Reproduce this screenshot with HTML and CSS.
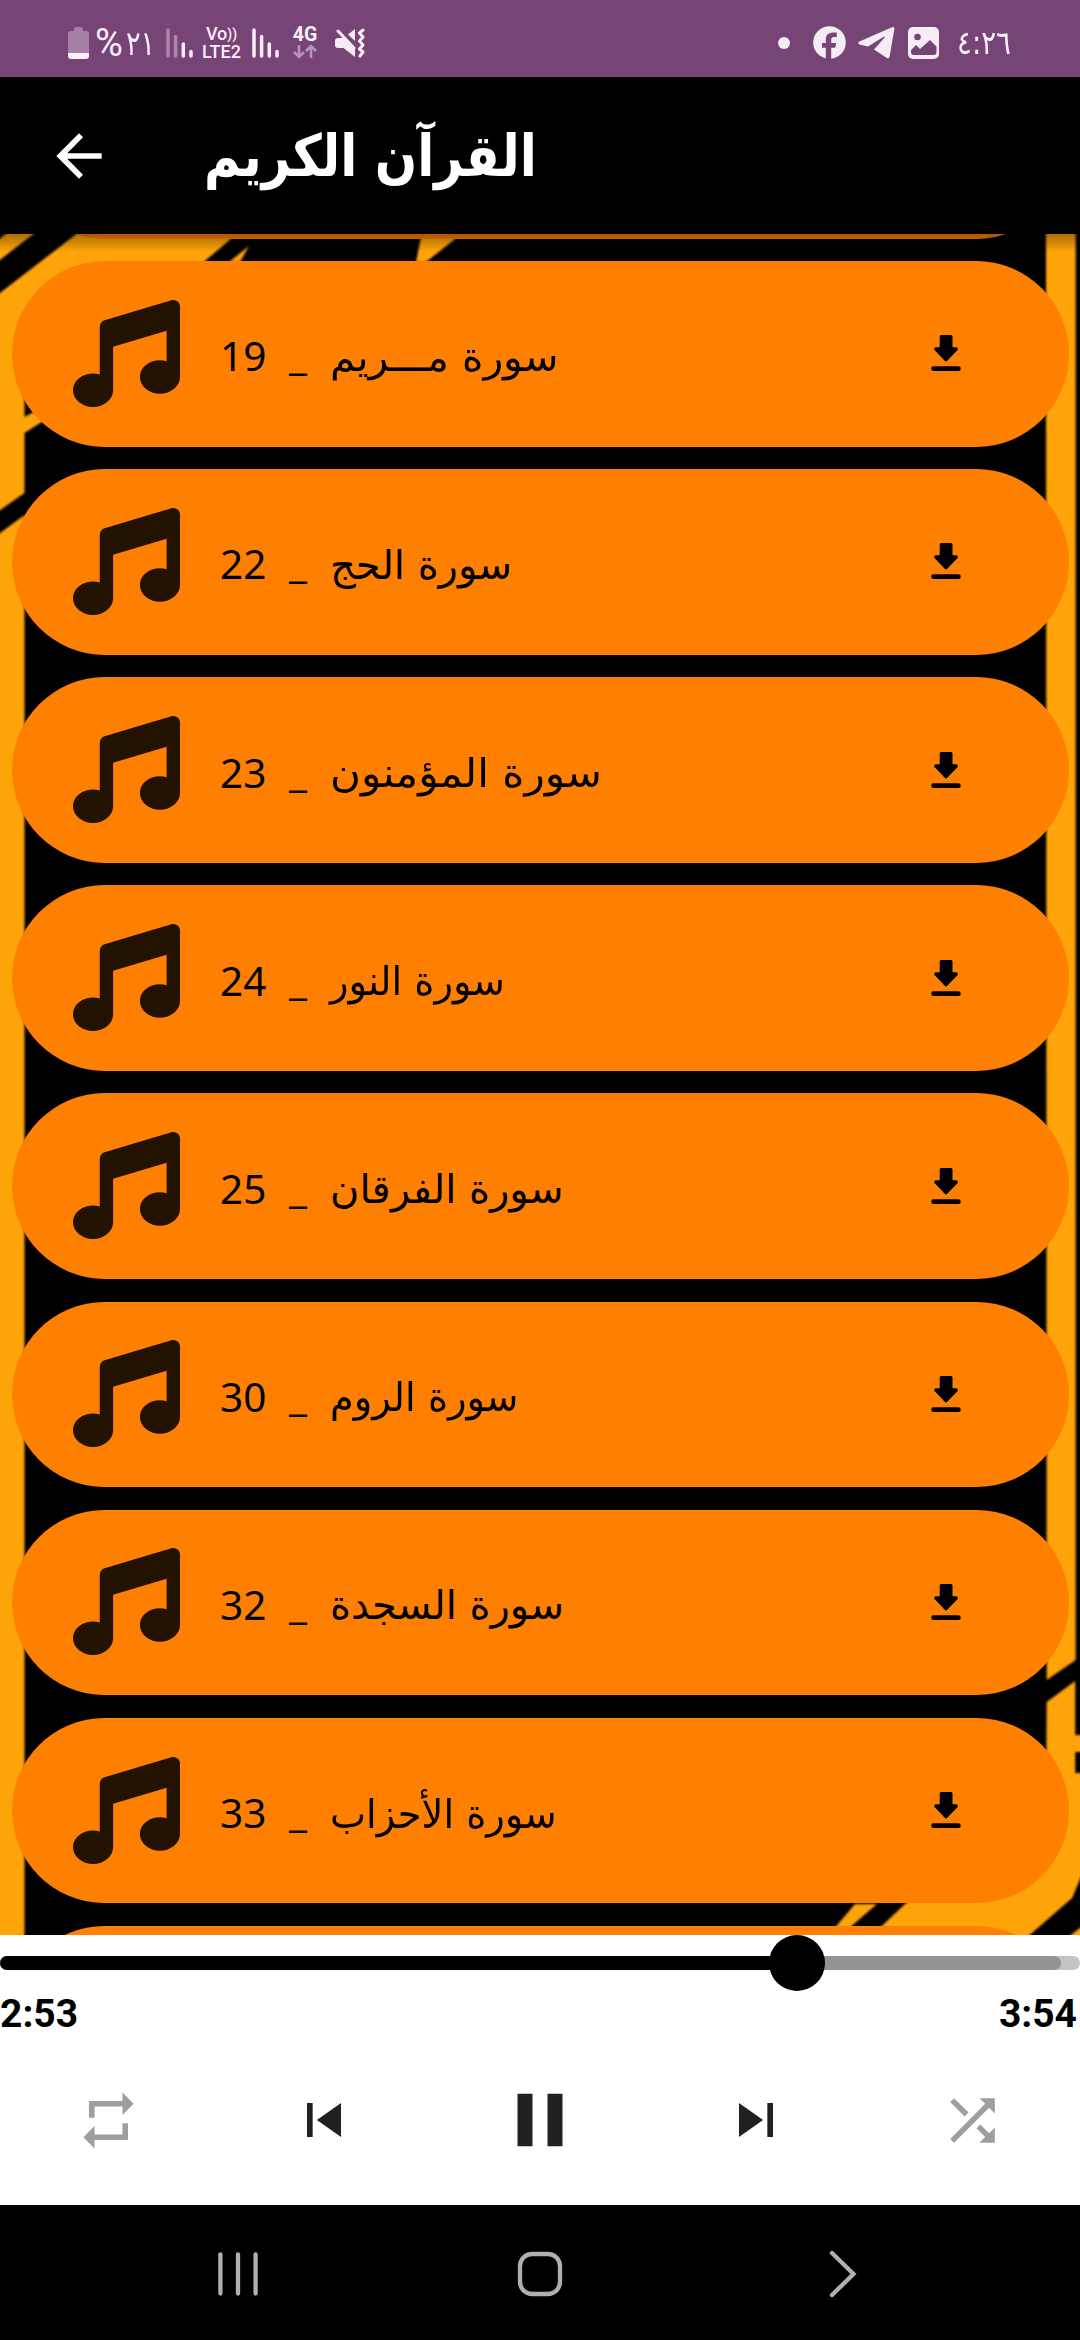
FILE: index.html
```html
<!DOCTYPE html>
<html lang="ar">
<head>
    <meta charset="UTF-8">
    <meta name="viewport" content="width=device-width, initial-scale=1.0">
    <title>القرآن الكريم</title>
    <link rel="stylesheet" href="styles.css">
</head>
<body>
    <!-- Shared icons -->
    <svg class="icon-defs">
        <symbol id="music" viewBox="0 0 512 512">
            <path d="M499.1 6.3c8.1 6 12.9 15.6 12.9 25.7v72V368c0 44.2-43 80-96 80s-96-35.8-96-80s43-80 96-80c11.2 0 22 1.6 32 4.6V147L192 223.8V432c0 44.2-43 80-96 80s-96-35.8-96-80s43-80 96-80c11.2 0 22 1.6 32 4.6V200 128c0-14.1 9.3-26.6 22.8-30.7l320-96c9.7-2.9 20.2-1.1 28.3 5z"/>
        </symbol>
        <symbol id="download" viewBox="0 0 30 36">
            <path d="M10 0h10a1.500 1.500 0 0 1 1.500 1.500V12.300h3.700a1.800 1.800 0 0 1 1.200 3L16 26a1.500 1.500 0 0 1-2 0L3.700 15.300a1.800 1.800 0 0 1 1.200-3H8.700V1.500A1.500 1.500 0 0 1 10 0z"/>
            <rect x="0.300" y="31.200" width="29.400" height="4.800" rx="2"/>
        </symbol>
        <symbol id="signal" viewBox="0 0 27 30">
            <path d="M2 2v26M9.600 8.500v19.500" class="bar-tall"/>
            <path d="M17.300 16v12M25 23.500v4.500"/>
        </symbol>
    </svg>

    <!-- Status bar -->
    <div class="status">
        <div class="status-left">
            <svg class="battery" width="21" height="32" viewBox="0 0 21 32">
                <path d="M6 2a2 2 0 0 1 2-2h5a2 2 0 0 1 2 2v2h3a3 3 0 0 1 3 3v19H0V7a3 3 0 0 1 3-3h3z" opacity=".35"/>
                <path d="M0 26h21v3a3 3 0 0 1-3 3H3a3 3 0 0 1-3-3z"/>
            </svg>
            <span class="percent">%</span><span class="level">٢١</span>
            <svg class="signal weak" width="27" height="30"><use href="#signal"/></svg>
            <div class="volte"><span>Vo<i>))</i></span><span>LTE2</span></div>
            <svg class="signal" width="27" height="30"><use href="#signal"/></svg>
            <div class="data">
                <span>4G</span>
                <svg width="24" height="15" viewBox="0 0 24 15"><path d="M6 1v12M1 8l5 5 5-5M18 14V2M13 7l5-5 5 5"/></svg>
            </div>
            <svg class="mute" width="30" height="30" viewBox="0 0 30 30">
                <path d="M20 1v12L13 6.500zM6 10l3-1L20 20v9L8.500 20H3q-3 0-3-3v-4q0-3 3-3z" fill="#f6ecf6"/>
                <path d="M3 3l16 17M28 2l-3.500 3 3.500 4-3.500 4 3.500 4-3.500 4 3.500 3-3 4" fill="none" stroke="#f6ecf6" stroke-width="3" stroke-linecap="round" stroke-linejoin="round"/>
            </svg>
        </div>
        <div class="status-right">
            <span class="dot"></span>
            <svg width="33" height="33" viewBox="0 0 33 33">
                <circle cx="16.500" cy="16.500" r="16.300" fill="#f6ecf6"/>
                <path d="M12.800 33V21.700H9v-4.600h3.800v-3.300q0-7.200 7.400-7.200h3.600v4.300h-2.600q-3 0-3 3v3.200h4.900l-.8 4.600h-4.100V33z" fill="#774476"/>
            </svg>
            <svg class="telegram" width="37" height="32" viewBox="0 0 37 32">
                <path d="M1.500 14.500L34 .3q2.600-.8 2.400 1.700L31.500 30q-.6 2-2.600 1L16 22.500 27 10q-.3-1-1.300-.3L10 19.500 1.500 17.500q-2.500-1.500 0-3z" fill="#f6ecf6"/>
            </svg>
            <svg class="gallery" width="31" height="32" viewBox="0 0 31 32">
                <rect width="31" height="32" rx="5" fill="#f6ecf6"/>
                <circle cx="9.500" cy="10" r="3.300" fill="#774476"/>
                <path d="M3 23l5-5 4 4 10-9 6.500 6.500V25q0 3-3 3h-19.500q-3 0-3-3z" fill="#774476"/>
            </svg>
            <span class="clock">٤:٢٦</span>
        </div>
    </div>

    <!-- App bar -->
    <header class="appbar">
        <svg class="back" width="68" height="68" viewBox="0 0 24 24"><path d="M20 11H7.830l5.590-5.590L12 4l-8 8 8 8 1.410-1.410L7.830 13H20v-2z"/></svg>
        <h1 dir="rtl">القرآن الكريم</h1>
    </header>

    <!-- Surah list over the striped wallpaper -->
    <main class="list">
        <svg class="wallpaper" width="1080" height="1701" viewBox="0 0 1080 1701">
            <rect width="1080" height="1701" fill="#000"/>
            <g class="stripes">
                <path d="M8-2h28L-4 29V8z"/>
                <path d="M79-2h160l-34 29L24.500 147V183l22-12v14L24.500 199V259L-4 279V62z"/>
                <path d="M249 12l-20 16h11zM422-2h42l-38 30h-10z"/>
                <path d="M24.500 281V1706H-4V302z"/>
                <path d="M1046-4h29.700v1430l-29 20z"/>
                <path d="M1046.700 1468l28.500-21v54h10v17h-10v21h10v94l-13 31-47 41H868l37-35 141-104z"/>
                <path d="M855 1670h22l-30 26h-14zM1085 1690v14h-18z"/>
            </g>
        </svg>
        <div class="rows">
            <div class="row"></div>
            <div class="row">
                <svg class="note"><use href="#music"/></svg>
                <span class="num">19</span><span class="sep">_</span><span class="name stretched" dir="rtl">سورة مـــريم</span>
                <svg class="download"><use href="#download"/></svg>
            </div>
            <div class="row">
                <svg class="note"><use href="#music"/></svg>
                <span class="num">22</span><span class="sep">_</span><span class="name" dir="rtl">سورة الحج</span>
                <svg class="download"><use href="#download"/></svg>
            </div>
            <div class="row">
                <svg class="note"><use href="#music"/></svg>
                <span class="num">23</span><span class="sep">_</span><span class="name wide" dir="rtl">سورة المؤمنون</span>
                <svg class="download"><use href="#download"/></svg>
            </div>
            <div class="row">
                <svg class="note"><use href="#music"/></svg>
                <span class="num">24</span><span class="sep">_</span><span class="name tight" dir="rtl">سورة النور</span>
                <svg class="download"><use href="#download"/></svg>
            </div>
            <div class="row">
                <svg class="note"><use href="#music"/></svg>
                <span class="num">25</span><span class="sep">_</span><span class="name" dir="rtl">سورة الفرقان</span>
                <svg class="download"><use href="#download"/></svg>
            </div>
            <div class="row">
                <svg class="note"><use href="#music"/></svg>
                <span class="num">30</span><span class="sep">_</span><span class="name tight" dir="rtl">سورة الروم</span>
                <svg class="download"><use href="#download"/></svg>
            </div>
            <div class="row">
                <svg class="note"><use href="#music"/></svg>
                <span class="num">32</span><span class="sep">_</span><span class="name" dir="rtl">سورة السجدة</span>
                <svg class="download"><use href="#download"/></svg>
            </div>
            <div class="row">
                <svg class="note"><use href="#music"/></svg>
                <span class="num">33</span><span class="sep">_</span><span class="name tight" dir="rtl">سورة الأحزاب</span>
                <svg class="download"><use href="#download"/></svg>
            </div>
            <div class="row"></div>
        </div>
    </main>

    <!-- Player -->
    <section class="player">
        <div class="seek">
            <div class="buffered"></div>
            <div class="played"></div>
            <div class="thumb"></div>
        </div>
        <div class="times"><span>2:53</span><span>3:54</span></div>
        <div class="controls">
            <button class="off"><svg width="67" height="67" viewBox="0 0 24 24"><path d="M7 7h10v3l4-4-4-4v3H5v6h2V7zm10 10H7v-3l-4 4 4 4v-3h12v-6h-2v4z"/></svg></button>
            <button><svg width="68" height="68" viewBox="0 0 24 24"><path d="M6 6h2v12H6zm3.500 6l8.500 6V6z"/></svg></button>
            <button><svg width="90" height="90" viewBox="0 0 24 24"><path d="M6 19h4V5H6v14zm8-14v14h4V5h-4z"/></svg></button>
            <button><svg width="68" height="68" viewBox="0 0 24 24"><path d="M6 18l8.500-6L6 6v12zM16 6v12h2V6h-2z"/></svg></button>
            <button class="off"><svg width="67" height="67" viewBox="0 0 24 24"><path d="M10.590 9.170L5.410 4 4 5.410l5.170 5.170 1.420-1.410zM14.500 4l2.040 2.040L4 18.590 5.410 20 17.960 7.460 20 9.500V4h-5.500zm.330 9.410l-1.410 1.410 3.130 3.130L14.500 20H20v-5.500l-2.040 2.040-3.130-3.130z"/></svg></button>
        </div>
    </section>

    <!-- System navigation -->
    <nav class="navbar">
        <svg width="44" height="46" viewBox="0 0 44 46"><path d="M4.400 3.500v39M22 3.500v39M39.600 3.500v39"/></svg>
        <svg width="46" height="46" viewBox="0 0 46 46"><rect x="3" y="3" width="40" height="40" rx="12"/></svg>
        <svg width="46" height="50" viewBox="0 0 46 50"><path d="M13 4l21.500 21L13 46"/></svg>
    </nav>
</body>
</html>
```
FILE: styles.css
```css
body {
    margin: 0;
    width: 1080px;
    height: 2340px;
    display: flex;
    flex-direction: column;
    overflow: hidden;
    background: #000;
    font-family: Roboto, "DejaVu Sans", sans-serif;
}

svg {
    display: block;
    flex-shrink: 0;
}

.icon-defs {
    position: absolute;
    width: 0;
    height: 0;
}

/* Status bar */
.status {
    height: 77px;
    box-sizing: border-box;
    padding: 8px 70px 0 68px;
    display: flex;
    justify-content: space-between;
    align-items: center;
    background: #774476;
    color: #fbeefb;
}

.status-left,
.status-right {
    display: flex;
    align-items: center;
}

.battery {
    fill: #fbeefb;
}

.percent {
    width: 30px;
    margin-left: 6px;
    font-size: 38px;
    line-height: 40px;
}

.level {
    width: 30px;
    margin-left: 1px;
    font-family: "DejaVu Sans", sans-serif;
    font-size: 34px;
    line-height: 40px;
    transform: scaleX(.8);
    transform-origin: left;
}

.signal {
    stroke: #fbeefb;
    stroke-width: 3.5;
    stroke-linecap: round;
    fill: none;
    margin-left: 10px;
}

.weak {
    --tall: .4;
}

.bar-tall {
    opacity: var(--tall, 1);
}

.volte {
    width: 41px;
    margin-left: 8px;
    display: flex;
    flex-direction: column;
    align-items: center;
    font-size: 18px;
    font-weight: 500;
    line-height: 17px;
}

.volte i {
    font-style: normal;
    font-size: 14px;
    vertical-align: 1px;
}

.data {
    margin-left: 13px;
    width: 26px;
    display: flex;
    flex-direction: column;
    align-items: center;
    font-size: 19.500px;
    font-weight: 700;
    line-height: 18px;
}

.data svg {
    fill: none;
    stroke: #b795b7;
    stroke-width: 2.6;
}

.mute {
    margin-left: 17px;
}

.dot {
    width: 12px;
    height: 12px;
    border-radius: 50%;
    background: #f6ecf6;
    margin-right: 23px;
}

.telegram {
    margin-left: 12px;
}

.gallery {
    margin-left: 13px;
}

.clock {
    margin-left: 18px;
    font-family: "DejaVu Sans", sans-serif;
    font-size: 33px;
    line-height: 40px;
    width: 53px;
    direction: ltr;
    unicode-bidi: bidi-override;
    transform: scaleX(.84);
    transform-origin: left;
}

/* App bar */
.appbar {
    height: 157px;
    box-sizing: border-box;
    display: flex;
    align-items: center;
    padding: 1px 0 0 45px;
}

.back {
    fill: #fff;
}

.appbar h1 {
    margin: 0 0 0 91px;
    font-family: "DejaVu Sans", sans-serif;
    font-size: 58px;
    font-weight: 700;
    line-height: 80px;
    white-space: nowrap;
    color: #fff;
    transform: scaleX(.858);
    transform-origin: left;
}

/* List */
.list {
    height: 1701px;
    position: relative;
    overflow: hidden;
}

/* shadow of the app bar */
.list::after {
    content: "";
    position: absolute;
    top: 0;
    left: 0;
    right: 0;
    height: 18px;
    background: linear-gradient(rgba(0, 0, 0, .32), rgba(0, 0, 0, .2) 40%, rgba(0, 0, 0, 0));
}

.wallpaper {
    position: absolute;
    top: 0;
    left: 0;
}

.stripes {
    fill: #ffa408;
    filter: blur(1.3px);
}

.rows {
    position: relative;
    margin: -181px 11.5px 0;
    display: flex;
    flex-direction: column;
    gap: 22.500px;
}

.row {
    height: 185.600px;
    flex-shrink: 0;
    box-sizing: border-box;
    padding: 0 108px 0 61.5px;
    border-radius: 93px;
    background: #ff8000;
    display: flex;
    align-items: center;
    color: #000;
    font-family: "Noto Sans", "DejaVu Sans", sans-serif;
    font-size: 40.500px;
    line-height: 60px;
    white-space: nowrap;
}

.note {
    width: 107px;
    height: 107px;
    margin-bottom: 1px;
    fill: #241200;
}

.num {
    width: 47px;
    margin-left: 40px;
    padding-top: 5px;
}

.sep {
    width: 18px;
    margin-left: 22px;
    padding-top: 3px;
}

.name {
    margin-left: 23px;
    padding-top: 6px;
    font-family: "DejaVu Sans", sans-serif;
    font-size: 40px;
    transform-origin: left;
}

.name.tight {
    transform: scaleX(.958);
}

.name.stretched {
    transform: scaleX(1.022);
}

.name.wide {
    transform: scaleX(1.055);
}

.download {
    width: 30px;
    height: 36px;
    margin-left: auto;
    margin-bottom: 1px;
}

/* Player */
.player {
    height: 270px;
    background: #fff;
}

.seek {
    position: relative;
    height: 14px;
    top: 21px;
    border-radius: 7px;
    background: #c4c4c4;
}

.buffered,
.played {
    position: absolute;
    left: 0;
    top: 0;
    height: 14px;
    border-radius: 7px;
}

.buffered {
    width: 1061px;
    background: #949494;
}

.played {
    width: 797px;
    background: #000;
}

.thumb {
    position: absolute;
    left: 769px;
    top: -21px;
    width: 56px;
    height: 56px;
    border-radius: 50%;
    background: #000;
}

.times {
    display: flex;
    justify-content: space-between;
    padding: 28px 3px 0 0;
    height: 74px;
    line-height: 74px;
    font-family: Roboto, sans-serif;
    font-size: 39px;
    font-weight: 700;
    color: #000;
}

.controls {
    display: flex;
    height: 110px;
    margin-top: 14px;
}

.controls button {
    flex: 1;
    padding: 0;
    border: none;
    background: none;
    display: flex;
    justify-content: center;
    align-items: center;
    fill: #212121;
}

.controls .off {
    fill: #9e9e9e;
}

/* System navigation */
.navbar {
    height: 135px;
    box-sizing: border-box;
    display: flex;
    justify-content: space-between;
    align-items: center;
    padding: 3px 215px 0 216px;
}

.navbar svg {
    fill: none;
    stroke: #b0b0b0;
    stroke-width: 4.3;
    stroke-linecap: round;
}
```
